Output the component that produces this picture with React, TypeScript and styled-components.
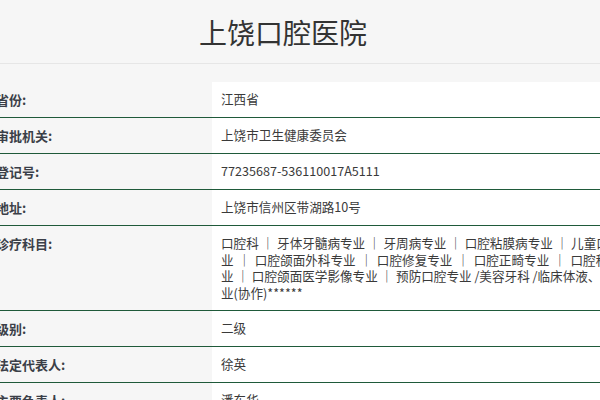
import React from "react";
import styled, { createGlobalStyle } from "styled-components";

const Global = createGlobalStyle`
  html, body { margin: 0; padding: 0; background: #f6f6f6; overflow: hidden; }
  body { font-family: "Noto Sans CJK SC", "Noto Sans", sans-serif; color: #333; }
`;

const Page = styled.div`
  width: 600px;
  height: 400px;
  overflow: hidden;
`;

const Header = styled.header`
  height: 63px;
  border-bottom: 1px solid #e6e6e6;
  display: flex;
  align-items: center;
  justify-content: center;
  padding-right: 34px;
`;

const Title = styled.h1`
  margin: 0;
  font-size: 28px;
  font-weight: 400;
  color: #333;
  line-height: 1;
`;

const Table = styled.div`
  margin-top: 18px;
  margin-left: -4px;
  width: 680px;
  display: grid;
  grid-template-columns: 216px 1fr;
`;

const Label = styled.div<{ $first?: boolean }>`
  padding: 9px 0;
  font-size: 13px;
  line-height: 17px;
  font-weight: 700;
  color: #3b3f48;
  background: #f6f6f6;
  border-top: ${(p) => (p.$first ? "none" : "1px solid #1f5a3a")};
`;

const Value = styled.div<{ $first?: boolean }>`
  padding: 9px 0 9px 9px;
  font-size: 12.6px;
  line-height: 16.5px;
  min-height: 17px;
  color: #3a3a3a;
  background: #fff;
  width: 420px;
  border-top: ${(p) => (p.$first ? "none" : "1px solid #1f5a3a")};
`;

const Sep = styled.span<{ $pad: number }>`
  padding: 0 ${(p) => p.$pad}px;
`;

const subjects = [
  "口腔科",
  "牙体牙髓病专业",
  "牙周病专业",
  "口腔粘膜病专业",
  "儿童口腔专业",
  "口腔颌面外科专业",
  "口腔修复专业",
  "口腔正畸专业",
  "口腔种植专业",
  "口腔颌面医学影像专业",
  "预防口腔专业 /美容牙科 /临床体液、血液专业(协作)******",
];

const sepPad = (i: number) => (i >= 5 && i <= 8 ? 1.5 : 0);

const SubjectList = () => (
  <>
    {subjects.map((s, i) => (
      <React.Fragment key={i}>
        {i > 0 && <Sep $pad={sepPad(i)}> ｜ </Sep>}
        {s}
      </React.Fragment>
    ))}
  </>
);

const rows: [string, React.ReactNode][] = [
  ["省份:", "江西省"],
  ["审批机关:", "上饶市卫生健康委员会"],
  ["登记号:", "77235687-536110017A5111"],
  ["地址:", "上饶市信州区带湖路10号"],
  ["诊疗科目:", <SubjectList />],
  ["级别:", "二级"],
  ["法定代表人:", "徐英"],
  ["主要负责人:", "潘东华"],
];

export default function App() {
  return (
    <Page>
      <Global />
      <Header>
        <Title>上饶口腔医院</Title>
      </Header>
      <Table>
        {rows.map(([k, v], i) => (
          <React.Fragment key={k}>
            <Label $first={i === 0}>{k}</Label>
            <Value $first={i === 0}>{v}</Value>
          </React.Fragment>
        ))}
      </Table>
    </Page>
  );
}
